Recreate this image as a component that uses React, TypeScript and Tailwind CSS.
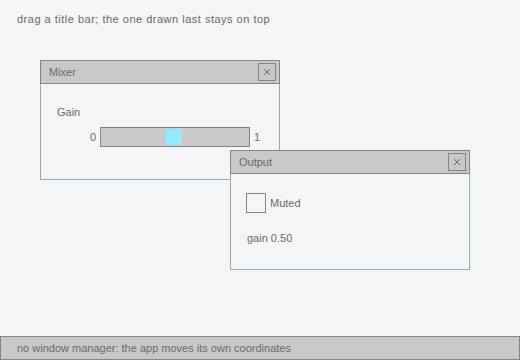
import React from 'react';

const font = { fontFamily: '"Liberation Sans", Arial, sans-serif' };

const CloseButton = () => (
  <div className="w-[18px] h-[18px] border border-[#838383] bg-[#c9c9c9] flex items-center justify-center">
    <svg width="8" height="8" viewBox="0 0 8 8" shapeRendering="crispEdges">
      <path d="M1 1 L7 7 M7 1 L1 7" stroke="#686868" strokeWidth="1" fill="none" />
    </svg>
  </div>
);

const Window = ({
  title,
  x,
  y,
  children,
}: {
  title: string;
  x: number;
  y: number;
  children: React.ReactNode;
}) => (
  <div
    className="absolute w-[240px] h-[120px] flex flex-col bg-[#f5f5f5] border border-[#90abb5]"
    style={{ left: x, top: y }}
  >
    <div className="-m-px h-[24px] shrink-0 flex items-center justify-between pl-[8px] pr-[3px] bg-[#c9c9c9] border border-[#838383]">
      <span className="text-[11px] text-[#686868] leading-none">{title}</span>
      <CloseButton />
    </div>
    <div className="flex-1">{children}</div>
  </div>
);

export default function App() {
  return (
    <div className="relative w-[520px] h-[360px] bg-[#f5f5f5] text-[#686868] overflow-hidden" style={font}>
      <div className="pl-[17px] pt-[13px] text-[11px] leading-[12px] tracking-[0.5px]">
        drag a title bar; the one drawn last stays on top
      </div>

      <Window title="Mixer" x={40} y={60}>
        <div className="pl-[16px] pt-[23px] text-[11px] leading-[12px]">Gain</div>
        <div className="flex items-center mt-[9px] pl-[49px] text-[11px] leading-none">
          <span className="w-[10px]">0</span>
          <div className="w-[150px] h-[20px] border border-[#838383] bg-[#c9c9c9] flex items-center pl-[65px]">
            <div className="w-[16px] h-[16px] bg-[#97e8ff]" />
          </div>
          <span className="ml-[4px]">1</span>
        </div>
      </Window>

      <Window title="Output" x={230} y={150}>
        <div className="flex items-center gap-[4px] pl-[15px] pt-[20px] text-[11px] leading-none">
          <div className="w-[20px] h-[20px] border border-[#838383]" />
          <span>Muted</span>
        </div>
        <div className="pl-[16px] pt-[19px] text-[11px] leading-[12px]">gain 0.50</div>
      </Window>

      <div className="absolute left-0 right-0 bottom-0 h-[24px] flex items-center pl-[16px] bg-[#c9c9c9] border border-[#838383] text-[11px]">
        no window manager: the app moves its own coordinates
      </div>
    </div>
  );
}
